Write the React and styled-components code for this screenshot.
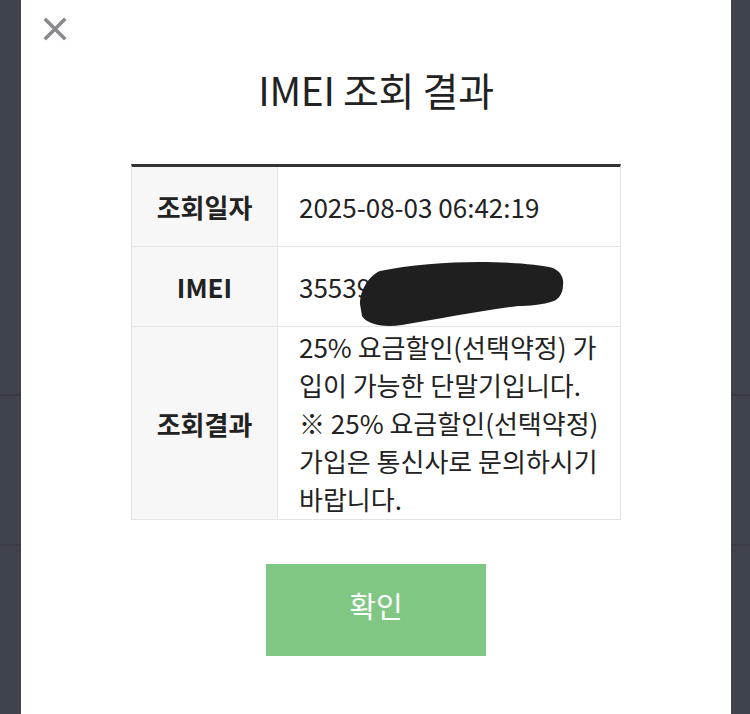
import React from 'react'
import styled, { createGlobalStyle } from 'styled-components'

const GlobalStyle = createGlobalStyle`
  html, body {
    margin: 0;
    padding: 0;
    background: #3f434c;
  }
  body {
    font-family: "Noto Sans CJK KR", "Noto Sans", sans-serif;
  }
`

const rows = [
  { label: '조회일자', lines: ['2025-08-03 06:42:19'] },
  { label: 'IMEI', lines: ['35539'], masked: true },
  {
    label: '조회결과',
    lines: [
      '25% 요금할인(선택약정) 가',
      '입이 가능한 단말기입니다.',
      '※ 25% 요금할인(선택약정)',
      '가입은 통신사로 문의하시기',
      '바랍니다.',
    ],
  },
]

function Scribble() {
  return (
    <Mask viewBox="0 0 208 70" width="208" height="70">
      <path
        d="M2 45 C2 30 12 16 22 12 C50 6 90 3 120 3 C150 3 180 5 195 9 C204 13 206 21 205 26 C205 33 202 39 196 42 C185 46 170 47 160 47 C120 52 80 60 44 66 C22 69 8 64 4 57 Z"
        fill="#1f1f1f"
      />
    </Mask>
  )
}

export default function App() {
  return (
    <>
      <GlobalStyle />
      <Page>
        <Modal>
          <Close aria-label="닫기">
            <svg width="24" height="24" viewBox="0 0 24 24">
              <path d="M3 3 L21 21 M21 3 L3 21" stroke="#8a8a8e" strokeWidth="3.6" strokeLinecap="square" />
            </svg>
          </Close>
          <Title>IMEI 조회 결과</Title>
          <Table>
            {rows.map((r, i) => (
              <Row key={i}>
                <Label>{r.label}</Label>
                <Value>
                  <div>
                    {r.lines.map((l, j) => (
                      <Line key={j}>{l}</Line>
                    ))}
                  </div>
                  {r.masked && <Scribble />}
                </Value>
              </Row>
            ))}
          </Table>
          <Confirm>확인</Confirm>
        </Modal>
      </Page>
    </>
  )
}

const Page = styled.div`
  min-height: 714px;
  background:
    linear-gradient(#3f434c 394px, #383b43 394px, #383b43 396px, #3f434c 396px, #3f434c 544px, #383b43 544px, #383b43 546px, #3f434c 546px);
`

const Modal = styled.div`
  width: 710px;
  min-height: 714px;
  margin-left: 21px;
  background: #fff;
  display: flex;
  flex-direction: column;
  align-items: center;
  position: relative;
  padding-top: 59px;
  box-sizing: border-box;
`

const Close = styled.button`
  position: absolute;
  left: 22px;
  top: 17px;
  border: 0;
  background: none;
  padding: 0;
  width: 24px;
  height: 24px;
  display: flex;
`

const Title = styled.h1`
  margin: 0;
  font-size: 39px;
  font-weight: 400;
  color: #222;
  line-height: 60px;
  letter-spacing: -0.3px;
`

const Table = styled.div`
  margin-top: 45px;
  width: 490px;
  border-top: 3px solid #333;
  border-left: 1px solid #e4e4e4;
  border-right: 1px solid #e4e4e4;
  box-sizing: border-box;
`

const Row = styled.div`
  display: grid;
  grid-template-columns: 146px 1fr;
  min-height: 79px;
  border-bottom: 1px solid #e4e4e4;
`

const Label = styled.div`
  background: #f7f7f7;
  border-right: 1px solid #e4e4e4;
  display: flex;
  align-items: center;
  justify-content: center;
  font-size: 26px;
  font-weight: 700;
  color: #222;
`

const Value = styled.div`
  position: relative;
  padding: 1px 10px 1px 21px;
  display: flex;
  align-items: center;
  font-size: 26px;
  line-height: 38px;
  color: #222;
`

const Line = styled.div`
  white-space: nowrap;
`

const Mask = styled.svg`
  position: absolute;
  left: 80px;
  top: 12px;
`

const Confirm = styled.button`
  margin-top: 44px;
  width: 220px;
  height: 92px;
  padding: 0 0 10px;
  border: 0;
  background: #81c784;
  color: #fff;
  font-family: "Noto Sans CJK KR", "Noto Sans", sans-serif;
  font-size: 29px;
  font-weight: 400;
`
